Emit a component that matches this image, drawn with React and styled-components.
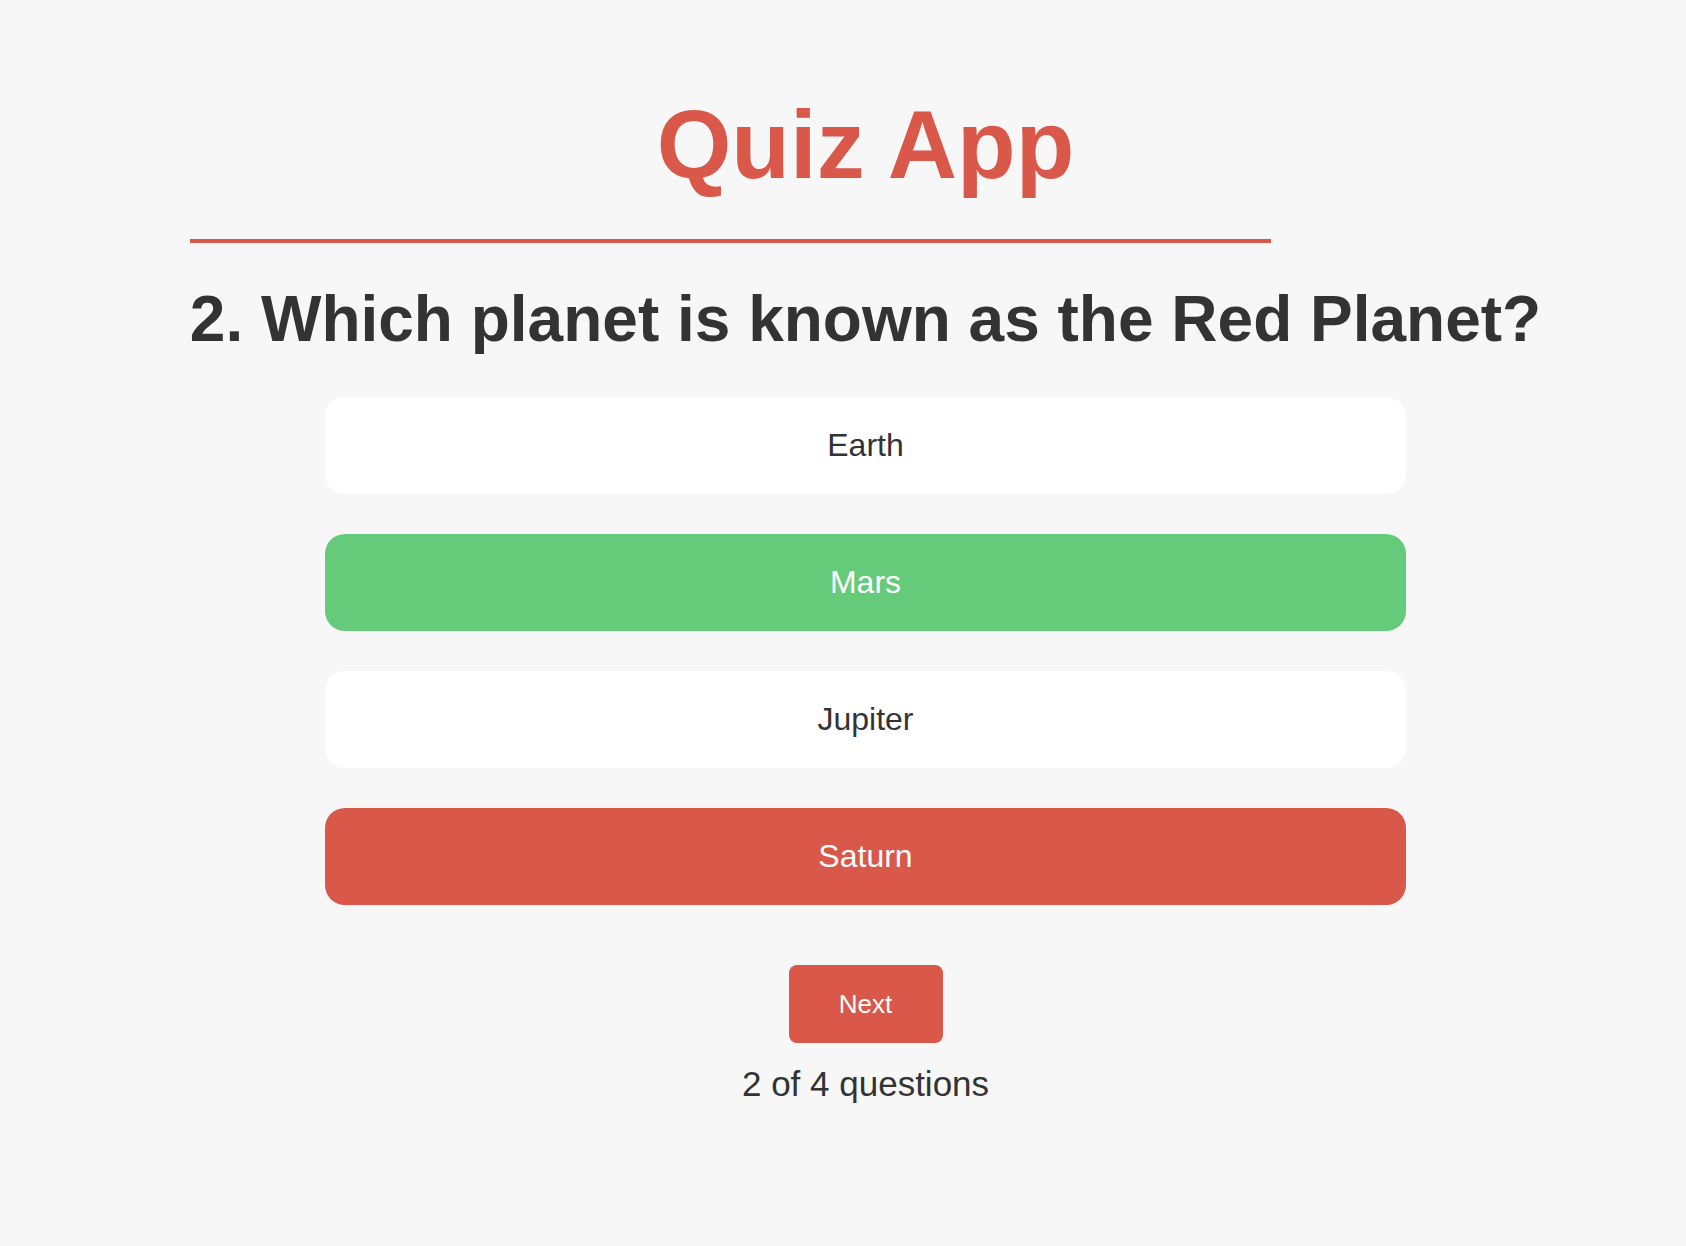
import React, { useState } from 'react';
import styled, { createGlobalStyle } from "styled-components";

const GlobalStyle = createGlobalStyle`
    html, body {
        margin: 0;
        padding: 0;
        background-color: #f7f7f7;
        min-height: 100%;
    }
    body {
        font-family: "Liberation Sans", Arial, sans-serif;
        color: #333333;
    }
`;

const question = {
    text: "Which planet is known as the Red Planet?",
    options: ["Earth", "Mars", "Jupiter", "Saturn"],
    answer: "Mars",
};

export default function App() {
    const [selected] = useState("Saturn");

    const statusOf = (option) => {
        if (option === question.answer) return "correct";
        if (option === selected) return "wrong";
        return "idle";
    }

    return (
        <>
            <GlobalStyle />
            <Container>
                <Title>Quiz App</Title>
                <Divider />
                <Question>2. {question.text}</Question>
                <OptionList>
                    {question.options.map(option => (
                        <Option key={option} status={statusOf(option)}>{option}</Option>
                    ))}
                </OptionList>
                <NextButton>Next</NextButton>
                <Progress>2 of 4 questions</Progress>
            </Container>
        </>
    )
}

const Container = styled.div`
    width: 1351px;
    margin-left: 190px;
    padding-top: 90px;
    display: flex;
    flex-direction: column;
    align-items: center;
`;

const Title = styled.h1`
    margin: 0;
    font-size: 96px;
    font-weight: 700;
    color: #d95849;
    line-height: 110px;
`;

const Divider = styled.div`
    align-self: flex-start;
    width: 80%;
    height: 4px;
    margin-top: 39px;
    background-color: #d95849;
`;

const Question = styled.h2`
    margin: 40px 0 0;
    font-size: 64px;
    font-weight: 700;
    line-height: 73px;
    white-space: nowrap;
    text-align: center;
    color: #333333;
`;

const OptionList = styled.div`
    width: 80%;
    margin-top: 41px;
    display: flex;
    flex-direction: column;
    gap: 40px;
`;

const optionColors = {
    idle: { bg: "#ffffff", fg: "#333333" },
    correct: { bg: "#66ca7b", fg: "#ffffff" },
    wrong: { bg: "#d95849", fg: "#ffffff" },
};

const Option = styled.div`
    height: 97px;
    border-radius: 20px;
    display: flex;
    align-items: center;
    justify-content: center;
    font-size: 32px;
    background-color: ${p => optionColors[p.status].bg};
    color: ${p => optionColors[p.status].fg};

    :hover {
        cursor: pointer;
    }
`;

const NextButton = styled.button`
    margin-top: 60px;
    width: 154px;
    height: 78px;
    border: none;
    border-radius: 8px;
    background-color: #d95849;
    color: white;
    font-family: "Liberation Sans", Arial, sans-serif;
    font-size: 26px;
    cursor: pointer;
`;

const Progress = styled.div`
    margin-top: 21px;
    font-size: 35px;
    line-height: 40px;
    color: #333333;
`;
